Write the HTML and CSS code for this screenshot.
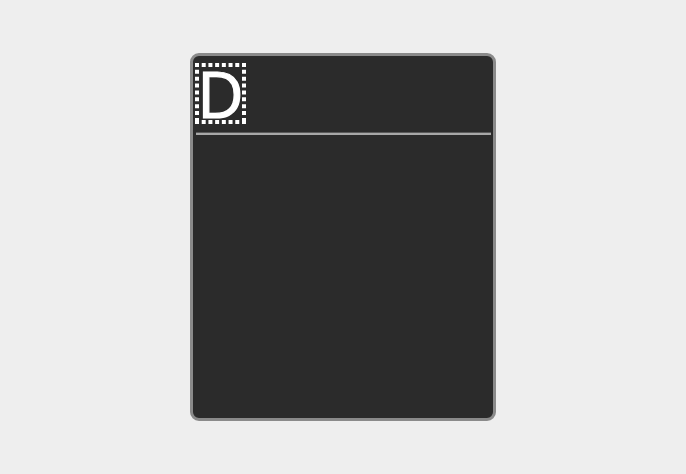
FILE: index.html
```html
<!DOCTYPE html>
<html>
<head>
<meta charset="utf-8">
<link rel="stylesheet" href="styles.css">
</head>
<body>
<div class="stage">
  <div class="card">
    <div class="card-header">
      <div class="badge">
        <svg class="badge-frame" width="51" height="61" viewBox="0 0 51 61" aria-hidden="true">
          <g stroke="#ffffff" stroke-width="4" fill="none">
            <line x1="0" y1="2" x2="51" y2="2" stroke-dasharray="4 2.71"/>
            <line x1="0" y1="59" x2="51" y2="59" stroke-dasharray="4 2.71"/>
            <line x1="2" y1="0" x2="2" y2="61" stroke-dasharray="4 2.86"/>
            <line x1="49" y1="0" x2="49" y2="61" stroke-dasharray="4 2.86"/>
          </g>
        </svg>
        <span class="badge-letter">D</span>
      </div>
    </div>
    <div class="divider"></div>
    <div class="card-body"></div>
  </div>
</div>
</body>
</html>
```

FILE: styles.css
```css
html, body {
  margin: 0;
  padding: 0;
  background: #eeeeee;
}
.stage {
  width: 686px;
  height: 474px;
  display: flex;
  align-items: center;
  justify-content: center;
}
.card {
  box-sizing: border-box;
  width: 306px;
  height: 368px;
  border: 3px solid #8a8a8a;
  border-radius: 9px;
  background: #2b2b2b;
  display: flex;
  flex-direction: column;
  overflow: hidden;
}
.card-header {
  height: 76px;
  padding: 7px 0 0 2px;
  box-sizing: border-box;
  display: flex;
  align-items: flex-start;
}
.badge {
  position: relative;
  box-sizing: border-box;
  width: 51px;
  height: 61px;
  display: flex;
  align-items: center;
  justify-content: center;
}
.badge-frame {
  position: absolute;
  left: 0;
  top: 0;
}
.badge-letter {
  color: #ffffff;
  font-family: "Open Sans", "Liberation Sans", sans-serif;
  font-size: 64px;
  font-weight: 400;
  -webkit-text-stroke: 1.2px #ffffff;
  line-height: 64px;
  margin-top: 1px;
}
.divider {
  height: 2px;
  margin: 0 2px 0 3px;
  background: #a8a8a8;
  border-top: 1px solid #5a5a5a;
}
.card-body {
  flex: 1;
}
```
